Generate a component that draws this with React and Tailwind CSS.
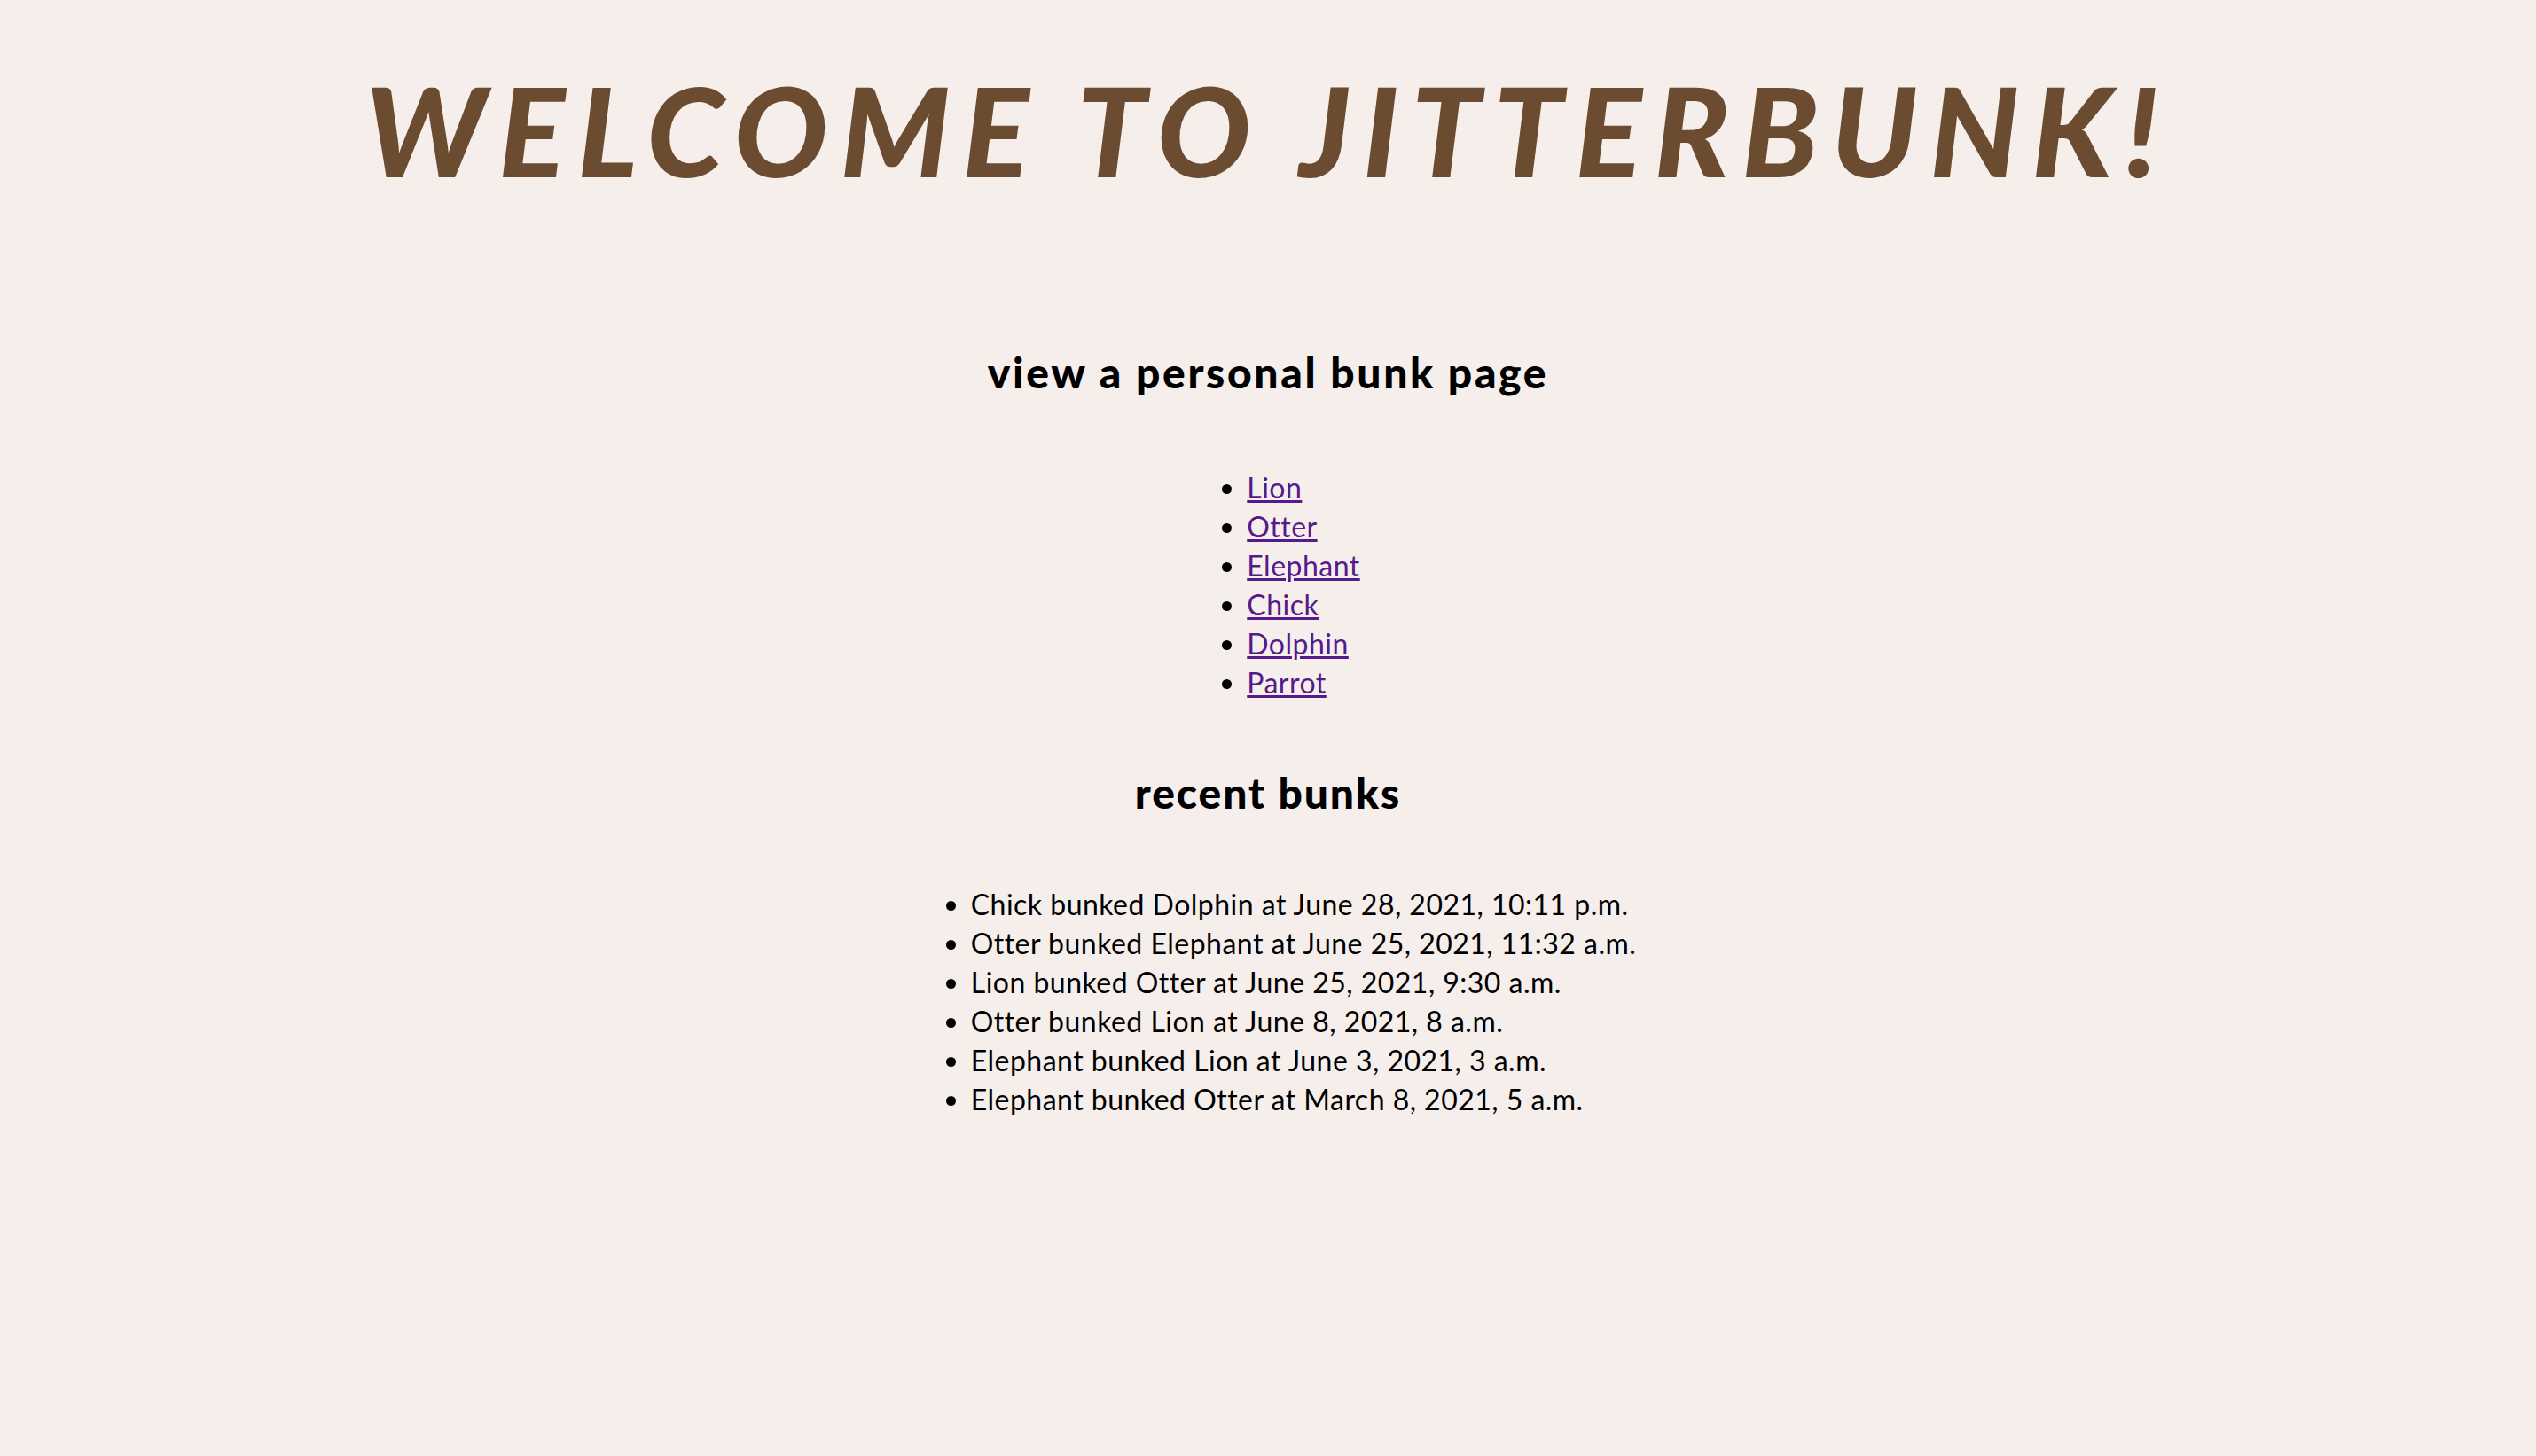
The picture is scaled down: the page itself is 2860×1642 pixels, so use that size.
import React from 'react';

const animals = ['Lion', 'Otter', 'Elephant', 'Chick', 'Dolphin', 'Parrot'];

const recentBunks = [
  'Chick bunked Dolphin at June 28, 2021, 10:11 p.m.',
  'Otter bunked Elephant at June 25, 2021, 11:32 a.m.',
  'Lion bunked Otter at June 25, 2021, 9:30 a.m.',
  'Otter bunked Lion at June 8, 2021, 8 a.m.',
  'Elephant bunked Lion at June 3, 2021, 3 a.m.',
  'Elephant bunked Otter at March 8, 2021, 5 a.m.',
];

export default function App() {
  return (
    <div className="min-h-screen bg-[#f5eeeb] text-center text-black font-['Lato','Noto_Sans',sans-serif]">
      {/* header */}
      <h1 className="pt-[76px] text-[140px] leading-none italic font-black tracking-[0.1em] text-[#6b4c30]">
        WELCOME TO JITTERBUNK!
      </h1>

      <h2 className="mt-[175px] text-[48px] leading-[1.2] font-black tracking-[0.055em]">view a personal bunk page</h2>
      <div>
        <ul className="mt-[79px] inline-block list-disc pl-20 text-left text-[32px] leading-[44px] tracking-[0.015em]">
          {animals.map((a) => (
            <li key={a}>
              <a href="#" className="text-[#551a8b] underline">{a}</a>
            </li>
          ))}
        </ul>
      </div>

      <h2 className="mt-[73px] text-[48px] leading-[1.2] font-black tracking-[0.04em]">recent bunks</h2>
      <div>
        <ul className="mt-[76px] inline-block list-disc pl-20 text-left text-[32px] leading-[44px] tracking-[0.015em]">
          {recentBunks.map((b) => (
            <li key={b}>{b}</li>
          ))}
        </ul>
      </div>
    </div>
  );
}
